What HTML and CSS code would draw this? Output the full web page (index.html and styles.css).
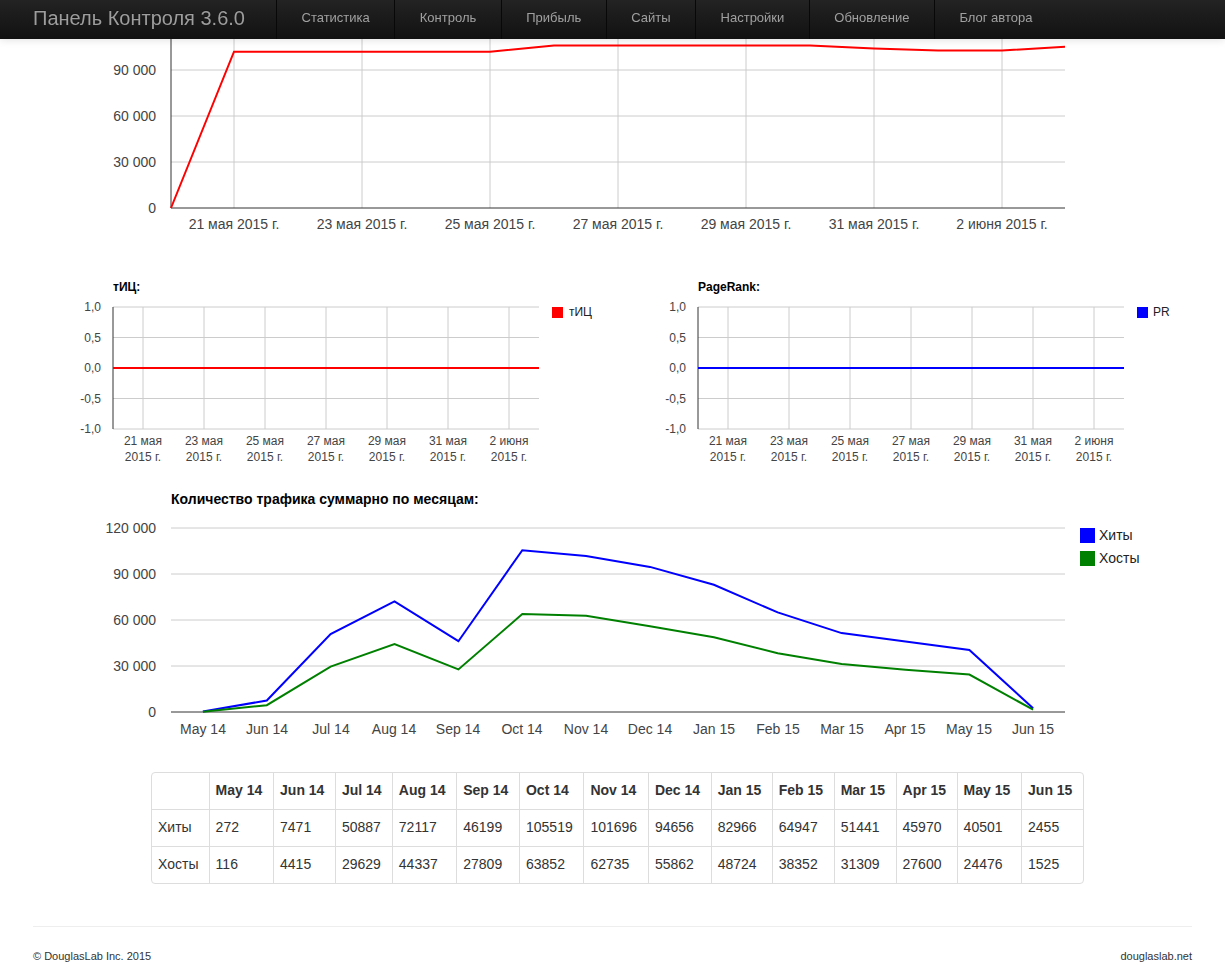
FILE: index.html
```html
<!DOCTYPE html>
<html lang="ru">
<head>
  <meta charset="UTF-8" />
  <meta name="viewport" content="width=device-width, initial-scale=1.0"/>
  <title>Панель Контроля 3.6.0</title>
  <link rel="stylesheet" href="styles.css">
</head>
<body>
  <nav class="navbar">
    <a class="brand" href="#">Панель Контроля 3.6.0</a>
    <ul class="nav">
      <li><a href="#">Статистика</a></li>
      <li><a href="#">Контроль</a></li>
      <li><a href="#">Прибыль</a></li>
      <li><a href="#">Сайты</a></li>
      <li><a href="#">Настройки</a></li>
      <li><a href="#">Обновление</a></li>
      <li><a href="#">Блог автора</a></li>
    </ul>
  </nav>

  <!-- daily hits, scrolled so the top is under the navbar -->
  <svg class="chart chart-top" width="1225" height="231" viewBox="0 39 1225 231">
    <g class="grid">
      <line x1="171" y1="70" x2="1065" y2="70"/>
      <line x1="171" y1="116" x2="1065" y2="116"/>
      <line x1="171" y1="162" x2="1065" y2="162"/>
      <line x1="234" y1="39" x2="234" y2="208"/>
      <line x1="362" y1="39" x2="362" y2="208"/>
      <line x1="490" y1="39" x2="490" y2="208"/>
      <line x1="618" y1="39" x2="618" y2="208"/>
      <line x1="746" y1="39" x2="746" y2="208"/>
      <line x1="874" y1="39" x2="874" y2="208"/>
      <line x1="1002" y1="39" x2="1002" y2="208"/>
    </g>
    <g class="axis">
      <line x1="171" y1="39" x2="171" y2="208"/>
      <line x1="171" y1="208" x2="1065" y2="208"/>
    </g>
    <g class="label label-y">
      <text x="156" y="75">90 000</text>
      <text x="156" y="121">60 000</text>
      <text x="156" y="167">30 000</text>
      <text x="156" y="213">0</text>
    </g>
    <g class="label label-x">
      <text x="234" y="229">21 мая 2015 г.</text>
      <text x="362" y="229">23 мая 2015 г.</text>
      <text x="490" y="229">25 мая 2015 г.</text>
      <text x="618" y="229">27 мая 2015 г.</text>
      <text x="746" y="229">29 мая 2015 г.</text>
      <text x="874" y="229">31 мая 2015 г.</text>
      <text x="1002" y="229">2 июня 2015 г.</text>
    </g>
    <polyline class="line red" points="171,208 234,51.7 298,51.7 362,51.7 426,51.7 490,51.7 554,45.5 618,45.5 682,45.5 746,45.5 810,45.5 874,48.5 938,50.5 1002,50.5 1065,46.7"/>
  </svg>

  <div class="mini-row">
    <!-- тИЦ -->
    <svg class="chart mini" width="612" height="210" viewBox="0 270 612 210">
      <text class="mini-title" x="113" y="291">тИЦ:</text>
      <g class="grid">
        <line x1="113" y1="307" x2="539" y2="307"/>
        <line x1="113" y1="337.5" x2="539" y2="337.5"/>
        <line x1="113" y1="398.5" x2="539" y2="398.5"/>
        <line x1="113" y1="429" x2="539" y2="429"/>
        <line x1="143" y1="307" x2="143" y2="429"/>
        <line x1="204" y1="307" x2="204" y2="429"/>
        <line x1="265" y1="307" x2="265" y2="429"/>
        <line x1="326" y1="307" x2="326" y2="429"/>
        <line x1="387" y1="307" x2="387" y2="429"/>
        <line x1="448" y1="307" x2="448" y2="429"/>
        <line x1="509" y1="307" x2="509" y2="429"/>
      </g>
      <line class="axis" x1="113" y1="307" x2="113" y2="429"/>
      <g class="label label-y small">
        <text x="101" y="311">1,0</text>
        <text x="101" y="341.5">0,5</text>
        <text x="101" y="372">0,0</text>
        <text x="101" y="402.5">-0,5</text>
        <text x="101" y="433">-1,0</text>
      </g>
      <g class="label label-x small">
        <text x="143" y="445">21 мая</text><text x="143" y="461">2015 г.</text>
        <text x="204" y="445">23 мая</text><text x="204" y="461">2015 г.</text>
        <text x="265" y="445">25 мая</text><text x="265" y="461">2015 г.</text>
        <text x="326" y="445">27 мая</text><text x="326" y="461">2015 г.</text>
        <text x="387" y="445">29 мая</text><text x="387" y="461">2015 г.</text>
        <text x="448" y="445">31 мая</text><text x="448" y="461">2015 г.</text>
        <text x="509" y="445">2 июня</text><text x="509" y="461">2015 г.</text>
      </g>
      <line class="line red" x1="113" y1="368" x2="539" y2="368"/>
      <rect x="552" y="307" width="11" height="11" fill="#ff0000"/>
      <text class="legend small" x="569" y="316">тИЦ</text>
    </svg>

    <!-- PageRank -->
    <svg class="chart mini" width="613" height="210" viewBox="612 270 613 210">
      <text class="mini-title" x="698" y="291">PageRank:</text>
      <g class="grid">
        <line x1="698" y1="307" x2="1124" y2="307"/>
        <line x1="698" y1="337.5" x2="1124" y2="337.5"/>
        <line x1="698" y1="398.5" x2="1124" y2="398.5"/>
        <line x1="698" y1="429" x2="1124" y2="429"/>
        <line x1="728" y1="307" x2="728" y2="429"/>
        <line x1="789" y1="307" x2="789" y2="429"/>
        <line x1="850" y1="307" x2="850" y2="429"/>
        <line x1="911" y1="307" x2="911" y2="429"/>
        <line x1="972" y1="307" x2="972" y2="429"/>
        <line x1="1033" y1="307" x2="1033" y2="429"/>
        <line x1="1094" y1="307" x2="1094" y2="429"/>
      </g>
      <line class="axis" x1="698" y1="307" x2="698" y2="429"/>
      <g class="label label-y small">
        <text x="686" y="311">1,0</text>
        <text x="686" y="341.5">0,5</text>
        <text x="686" y="372">0,0</text>
        <text x="686" y="402.5">-0,5</text>
        <text x="686" y="433">-1,0</text>
      </g>
      <g class="label label-x small">
        <text x="728" y="445">21 мая</text><text x="728" y="461">2015 г.</text>
        <text x="789" y="445">23 мая</text><text x="789" y="461">2015 г.</text>
        <text x="850" y="445">25 мая</text><text x="850" y="461">2015 г.</text>
        <text x="911" y="445">27 мая</text><text x="911" y="461">2015 г.</text>
        <text x="972" y="445">29 мая</text><text x="972" y="461">2015 г.</text>
        <text x="1033" y="445">31 мая</text><text x="1033" y="461">2015 г.</text>
        <text x="1094" y="445">2 июня</text><text x="1094" y="461">2015 г.</text>
      </g>
      <line class="line blue" x1="698" y1="368" x2="1124" y2="368"/>
      <rect x="1137" y="307" width="11" height="11" fill="#0000ff"/>
      <text class="legend small" x="1153" y="316">PR</text>
    </svg>
  </div>

  <!-- monthly traffic -->
  <svg class="chart chart-month" width="1225" height="270" viewBox="0 480 1225 270">
    <text class="chart-title" x="171" y="504">Количество трафика суммарно по месяцам:</text>
    <g class="grid">
      <line x1="171" y1="528" x2="1065" y2="528"/>
      <line x1="171" y1="574" x2="1065" y2="574"/>
      <line x1="171" y1="620" x2="1065" y2="620"/>
      <line x1="171" y1="666" x2="1065" y2="666"/>
    </g>
    <line class="axis" x1="171" y1="712" x2="1065" y2="712"/>
    <g class="label label-y">
      <text x="156" y="533">120 000</text>
      <text x="156" y="579">90 000</text>
      <text x="156" y="625">60 000</text>
      <text x="156" y="671">30 000</text>
      <text x="156" y="717">0</text>
    </g>
    <g class="label label-x">
      <text x="203" y="734">May 14</text>
      <text x="267" y="734">Jun 14</text>
      <text x="331" y="734">Jul 14</text>
      <text x="394" y="734">Aug 14</text>
      <text x="458" y="734">Sep 14</text>
      <text x="522" y="734">Oct 14</text>
      <text x="586" y="734">Nov 14</text>
      <text x="650" y="734">Dec 14</text>
      <text x="714" y="734">Jan 15</text>
      <text x="778" y="734">Feb 15</text>
      <text x="842" y="734">Mar 15</text>
      <text x="905" y="734">Apr 15</text>
      <text x="969" y="734">May 15</text>
      <text x="1033" y="734">Jun 15</text>
    </g>
    <polyline class="line blue" points="202.9,711.6 266.8,700.5 330.6,634 394.5,601.4 458.4,641.2 522.3,550.2 586.1,556.1 650,566.9 713.9,584.8 777.7,612.4 841.6,633.1 905.5,641.5 969.4,649.9 1033.1,708.2"/>
    <polyline class="line green" points="202.9,711.8 266.8,705.2 330.6,666.6 394.5,644 458.4,669.4 522.3,614.1 586.1,615.8 650,626.3 713.9,637.3 777.7,653.2 841.6,664 905.5,669.7 969.4,674.5 1033.1,709.7"/>
    <rect x="1080" y="528" width="15" height="15" fill="#0000ff"/>
    <text class="legend" x="1099" y="540">Хиты</text>
    <rect x="1080" y="551" width="15" height="15" fill="#008000"/>
    <text class="legend" x="1099" y="563">Хосты</text>
  </svg>

  <table class="traffic-table">
    <thead>
      <tr>
        <th></th>
        <th>May 14</th><th>Jun 14</th><th>Jul 14</th><th>Aug 14</th><th>Sep 14</th><th>Oct 14</th><th>Nov 14</th>
        <th>Dec 14</th><th>Jan 15</th><th>Feb 15</th><th>Mar 15</th><th>Apr 15</th><th>May 15</th><th>Jun 15</th>
      </tr>
    </thead>
    <tbody>
      <tr>
        <td>Хиты</td>
        <td>272</td><td>7471</td><td>50887</td><td>72117</td><td>46199</td><td>105519</td><td>101696</td>
        <td>94656</td><td>82966</td><td>64947</td><td>51441</td><td>45970</td><td>40501</td><td>2455</td>
      </tr>
      <tr>
        <td>Хосты</td>
        <td>116</td><td>4415</td><td>29629</td><td>44337</td><td>27809</td><td>63852</td><td>62735</td>
        <td>55862</td><td>48724</td><td>38352</td><td>31309</td><td>27600</td><td>24476</td><td>1525</td>
      </tr>
    </tbody>
  </table>

  <footer class="footer">
    <span>© DouglasLab Inc. 2015</span>
    <span>douglaslab.net</span>
  </footer>
</body>
</html>
```

FILE: styles.css
```css
body {
  margin: 0;
  padding-top: 39px;
  background: #fff;
  font-family: "Liberation Sans", Arial, Helvetica, sans-serif;
  font-size: 14px;
  line-height: 1.42857;
  color: #333;
}

a {
  text-decoration: none;
}

.navbar {
  position: fixed;
  top: 0;
  left: 0;
  right: 0;
  z-index: 10;
  height: 39px;
  display: flex;
  background: linear-gradient(to bottom, #232323, #111111);
  box-shadow: 0 1px 8px rgba(0, 0, 0, 0.12);
}

.brand {
  display: block;
  width: 243px;
  padding-left: 33px;
  line-height: 36px;
  font-size: 20px;
  color: #9d9d9d;
  text-shadow: 0 -1px 0 rgba(0, 0, 0, 0.25);
}

.nav {
  display: flex;
  margin: 0;
  padding: 0;
  list-style: none;
}

.nav li {
  border-left: 1px solid #080808;
}

.nav a {
  display: block;
  padding: 0 24.5px;
  line-height: 36px;
  font-size: 13px;
  color: #a0a0a0;
}

.nav a:hover {
  color: #fff;
}

.chart {
  display: block;
  font-family: "Liberation Sans", Arial, Helvetica, sans-serif;
}

.grid line {
  stroke: #cccccc;
  stroke-width: 1;
}

.axis line,
line.axis {
  stroke: #333333;
  stroke-width: 1;
}

.label text {
  font-size: 14px;
  fill: #444;
}

.label.small text {
  font-size: 12px;
}

.label-y text {
  text-anchor: end;
}

.label-x text {
  text-anchor: middle;
}

.line {
  fill: none;
  stroke-width: 2;
}

.red { stroke: #ff0000; }
.blue { stroke: #0000ff; }
.green { stroke: #008000; }

.legend {
  font-size: 14px;
  fill: #222;
}

.legend.small {
  font-size: 12px;
}

.mini-row {
  display: flex;
}

.mini-title {
  font-size: 12px;
  font-weight: bold;
  fill: #000;
}

.chart-title {
  font-size: 14px;
  font-weight: bold;
  fill: #000;
}

.traffic-table {
  width: 933px;
  margin: 22px 0 0 151px;
  border-collapse: separate;
  border-spacing: 0;
  border: 1px solid #ddd;
  border-radius: 4px;
}

.traffic-table th,
.traffic-table td {
  padding: 8px 6px;
  text-align: left;
  border-left: 1px solid #ddd;
  border-top: 1px solid #ddd;
}

.traffic-table th {
  font-weight: bold;
  border-top: 0;
}

.traffic-table th:first-child,
.traffic-table td:first-child {
  border-left: 0;
}

.footer {
  display: flex;
  justify-content: space-between;
  margin: 42px 33px 0;
  padding-top: 21px;
  border-top: 1px solid #eee;
  font-size: 11px;
  line-height: 16px;
}
```
